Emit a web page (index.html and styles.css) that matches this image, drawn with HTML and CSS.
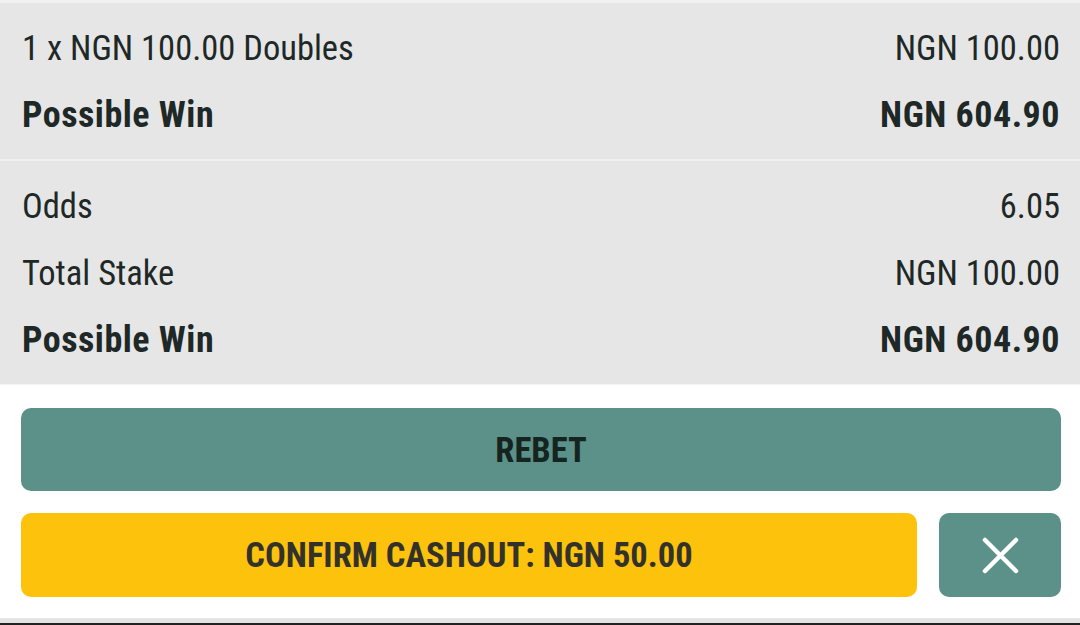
FILE: index.html
```html
<!DOCTYPE html>
<html lang="en">
	<head>
		<meta charset="UTF-8" />
		<meta name="viewport" content="width=device-width, initial-scale=1.0" />
		<title>Bet slip</title>
		<link rel="stylesheet" href="styles.css">
	</head>
	<body>
		<div class="slip">
			<section class="summary">
				<div class="row">
					<span>1 x NGN 100.00 Doubles</span>
					<span>NGN 100.00</span>
				</div>
				<div class="row strong">
					<span>Possible Win</span>
					<span>NGN 604.90</span>
				</div>
			</section>
			<section class="summary">
				<div class="row">
					<span>Odds</span>
					<span>6.05</span>
				</div>
				<div class="row">
					<span>Total Stake</span>
					<span>NGN 100.00</span>
				</div>
				<div class="row strong">
					<span>Possible Win</span>
					<span>NGN 604.90</span>
				</div>
			</section>
			<div class="actions">
				<button class="btn rebet">REBET</button>
				<div class="cashout-line">
					<button class="btn cashout">CONFIRM CASHOUT: NGN 50.00</button>
					<button class="btn cancel" aria-label="Cancel">
						<svg width="37" height="37" viewBox="0 0 37 37">
							<path d="M3 3L34 34M34 3L3 34" stroke="#fff" stroke-width="4.5" stroke-linecap="round" fill="none" />
						</svg>
					</button>
				</div>
			</div>
			<div class="edge"></div>
		</div>
	</body>
</html>
```

FILE: styles.css
```css
body,
html {
	margin: 0;
	height: 100%;
	font-family: "Roboto Condensed", "Liberation Sans Narrow", Roboto, sans-serif;
	color: #1e2826;
	background: #fff;
}
.slip {
	display: flex;
	flex-direction: column;
	height: 100%;
	border-top: 3px solid #f1f1f1;
	box-sizing: border-box;
}
.summary {
	background-color: #e6e6e6;
	padding: 11px 20px 11px 22px;
}
.summary + .summary {
	border-top: 2px solid #efefef;
}
.row {
	display: flex;
	justify-content: space-between;
	align-items: center;
	height: 67px;
	font-size: 34.5px;
	font-weight: 400;
}
.row.strong {
	font-size: 36px;
	font-weight: 700;
	letter-spacing: 0.5px;
}
.actions {
	display: flex;
	flex-direction: column;
	gap: 22px;
	padding: 23px 19px 21px 21px;
	border-top: 1px solid #f4f4f4;
	border-bottom: 5px solid #e4e4e4;
}
.edge {
	height: 2px;
	background-color: #222;
}
.btn {
	border: none;
	border-radius: 10px;
	height: 84px;
	font-family: inherit;
	font-size: 34.5px;
	font-weight: 700;
	cursor: pointer;
	appearance: none;
}
.rebet {
	height: 83px;
	background-color: #5b9188;
	color: #15241f;
}
.cashout-line {
	display: flex;
	gap: 22px;
}
.cashout {
	flex: 1;
	background-color: #fdc20c;
	color: #33322a;
}
.cancel {
	width: 122px;
	background-color: #5b9188;
	display: flex;
	align-items: center;
	justify-content: center;
}
```
